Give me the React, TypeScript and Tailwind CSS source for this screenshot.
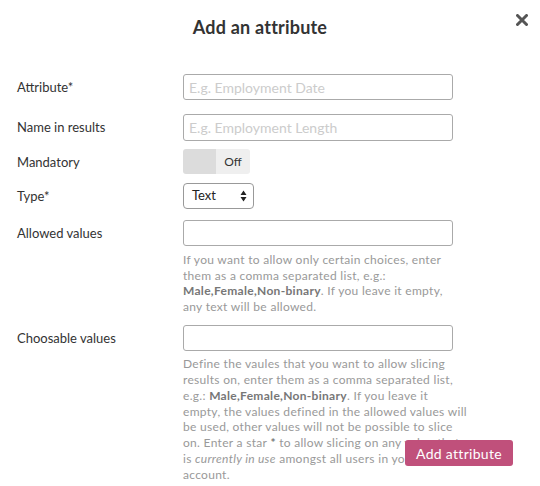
import React from "react";

const font = { fontFamily: "Lato, 'Noto Sans', sans-serif" };

function Row({ label, top, children }: { label: string; top: string; children: React.ReactNode }) {
  return (
    <div className={`flex ${top}`}>
      <div className="w-[166px] shrink-0 text-[13px] text-[#333] leading-[26px]">{label}</div>
      <div className="flex flex-col">{children}</div>
    </div>
  );
}

export default function App() {
  return (
    <div style={font} className="relative w-[540px] h-[486px] bg-white overflow-hidden">
      <div className="relative pt-[15px] pr-[20px] text-center">
        <h1 className="text-[18px] leading-[24px] font-bold text-[#333] tracking-[0.2px]">Add an attribute</h1>
        <button className="absolute right-[12px] top-[14px] text-[#555]" aria-label="Close">
          <svg width="12" height="12" viewBox="0 0 12 12">
            <path d="M1.5 1.5 L10.5 10.5 M10.5 1.5 L1.5 10.5" stroke="currentColor" strokeWidth="3" strokeLinecap="round" />
          </svg>
        </button>
      </div>

      <div className="px-[17px]">
        <Row label="Attribute*" top="mt-[35px]">
          <input
            className="w-[270px] h-[26px] border border-[#aaa] rounded-[3px] px-[5px] text-[14px] placeholder:text-[#ccc] outline-none"
            placeholder="E.g. Employment Date"
          />
        </Row>
        <Row label="Name in results" top="mt-[14px]">
          <input
            className="w-[270px] h-[27px] border border-[#aaa] rounded-[3px] px-[5px] text-[14px] placeholder:text-[#ccc] outline-none"
            placeholder="E.g. Employment Length"
          />
        </Row>
        <Row label="Mandatory" top="mt-[8px]">
          <div className="flex w-[67px] h-[25px] rounded-[3px] overflow-hidden">
            <div className="w-[33px] bg-[#dcdcdc]" />
            <div className="flex-1 bg-[#efefef] text-[12px] text-[#333] flex items-center justify-center">Off</div>
          </div>
        </Row>
        <Row label="Type*" top="mt-[8px]">
          <div className="flex items-center justify-between w-[71px] h-[26px] border border-[#999] rounded-[4px] pl-[8px] pr-[6px] text-[13px] text-[#222]">
            <span>Text</span>
            <svg width="7" height="12" viewBox="0 0 7 12">
              <path d="M3.5 0.5 L6.5 5 L0.5 5 Z M3.5 11.5 L6.5 7 L0.5 7 Z" fill="#222" />
            </svg>
          </div>
        </Row>
        <Row label="Allowed values" top="mt-[11px]">
          <input className="w-[270px] h-[26px] border border-[#aaa] rounded-[3px] px-[4px] text-[13px] outline-none" />
          <p className="mt-[6px] w-[300px] text-[12px] tracking-[0.3px] leading-[15.7px] text-[#999] whitespace-nowrap">
            If you want to allow only certain choices, enter
            <br />
            them as a comma separated list, e.g.:
            <br />
            <b className="text-[#777]">Male,Female,Non-binary</b>. If you leave it empty,
            <br />
            any text will be allowed.
          </p>
        </Row>
        <Row label="Choosable values" top="mt-[10px]">
          <input className="w-[270px] h-[26px] border border-[#aaa] rounded-[3px] px-[4px] text-[13px] outline-none" />
          <p className="mt-[5px] w-[300px] text-[12px] tracking-[0.3px] leading-[15.9px] text-[#999] whitespace-nowrap">
            Define the vaules that you want to allow slicing
            <br />
            results on, enter them as a comma separated list,
            <br />
            e.g.: <b className="text-[#777]">Male,Female,Non-binary</b>. If you leave it
            <br />
            empty, the values defined in the allowed values will
            <br />
            be used, other values will not be possible to slice
            <br />
            on. Enter a star <b className="text-[#777]">*</b> to allow slicing on any value that
            <br />
            is <i>currently in use</i> amongst all users in your
            <br />
            account.
          </p>
        </Row>
      </div>

      <button className="absolute left-[405px] top-[440px] w-[108px] h-[26px] rounded-[3px] bg-[#c0507b] text-white text-[14px] tracking-[0.3px]">
        Add attribute
      </button>
    </div>
  );
}
